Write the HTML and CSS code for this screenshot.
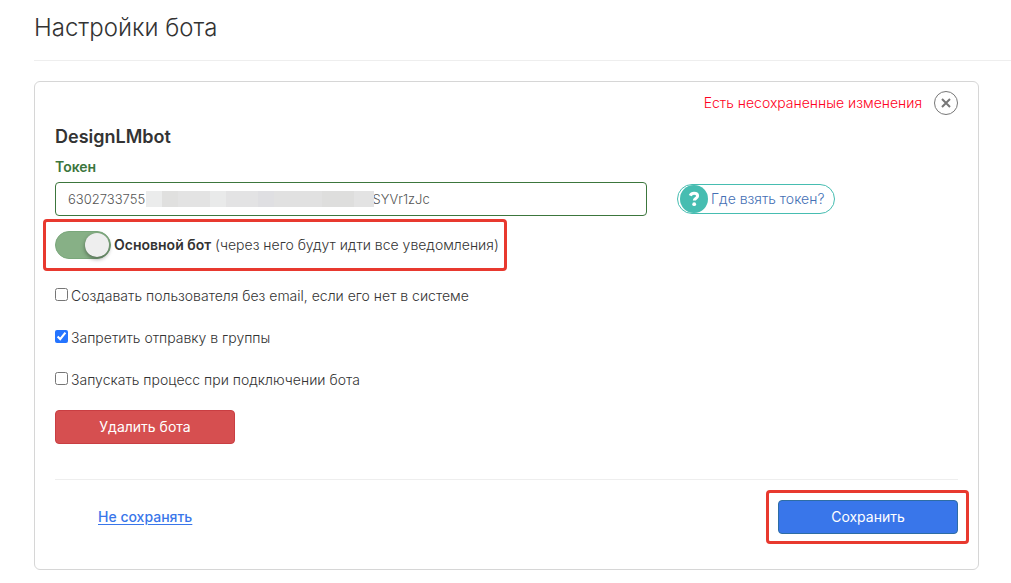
FILE: index.html
```
<!DOCTYPE html>
<html lang="ru">
<head>
    <meta charset="UTF-8">
    <meta name="viewport" content="width=device-width, initial-scale=1.0">
    <title>Настройки бота</title>
    <link rel="stylesheet" href="styles.css">
</head>
<body>
    <main class="page">
        <h1 class="page-title">Настройки бота</h1>

        <form class="card">
            <div class="card-top">
                <span class="unsaved">Есть несохраненные изменения</span>
                <button type="button" class="close" aria-label="Закрыть">
                    <svg width="10" height="10" viewBox="0 0 10 10"><path d="M1 1l8 8M9 1L1 9" stroke="#777" stroke-width="2" fill="none"/></svg>
                </button>
            </div>

            <h2 class="bot-name">DesignLMbot</h2>

            <label class="token-label" for="token">Токен</label>
            <div class="row">
                <div class="token-field">
                    <input type="text" id="token" class="token-input" value="6302733755&emsp;&emsp;&emsp;&emsp;&emsp;&emsp;&emsp;&emsp;&emsp;&emsp;&emsp;&emsp;&emsp;&emsp;&emsp;&emsp;&emsp;&ensp;SYVr1zJc">
                    <span class="mask"></span>
                </div>
                <div class="help-col">
                    <a href="#" class="help">
                        <span class="help-icon">
                            <svg width="28" height="28" viewBox="0 0 28 28"><circle cx="14" cy="14" r="14" fill="#46bdb1"/><path d="M10.2 10.6C11.1 8.8 12.4 8.2 14 8.2c2.1 0 3.6 1.1 3.6 2.7 0 2.3-3.3 2.2-3.3 4.6" fill="none" stroke="#fff" stroke-width="3"/><circle cx="14.2" cy="19.2" r="1.9" fill="#fff"/></svg>
                        </span>
                        Где взять токен?
                    </a>
                </div>
            </div>

            <label class="main-bot highlight">
                <input type="checkbox" class="switch" checked>
                <span><b>Основной бот</b> (через него будут идти все уведомления)</span>
            </label>

            <div class="options">
                <label class="option"><input type="checkbox"> Создавать пользователя без email, если его нет в системе</label>
                <label class="option"><input type="checkbox" checked> Запретить отправку в группы</label>
                <label class="option"><input type="checkbox"> Запускать процесс при подключении бота</label>
            </div>

            <button type="button" class="btn btn-danger">Удалить бота</button>

            <div class="card-footer">
                <a href="#" class="cancel">Не сохранять</a>
                <span class="save highlight"><button type="submit" class="btn btn-primary">Сохранить</button></span>
            </div>
        </form>
    </main>
</body>
</html>
```
FILE: styles.css
```
* {
    box-sizing: border-box;
}
body {
    margin: 0;
    background: #fff;
    color: #333;
    font-family: Inter, "Open Sans", sans-serif;
    font-size: 14px;
    font-weight: 300;
    line-height: 20px;
}
.page {
    padding: 12px 0 13px 34px;
}
.page-title {
    margin: 0 0 20px;
    padding-bottom: 16px;
    border-bottom: 1px solid #eee;
    font-size: 24px;
    font-weight: 300;
    line-height: 32px;
}
.card {
    margin-right: 32px;
    padding: 9px 20px 35px;
    border: 1px solid #d6d6d6;
    border-radius: 6px;
}
.card-top {
    display: flex;
    justify-content: flex-end;
    align-items: center;
    gap: 12px;
}
.unsaved {
    color: #ff0022;
}
.close {
    display: flex;
    align-items: center;
    justify-content: center;
    width: 24px;
    height: 24px;
    padding: 0;
    border: 1px solid #777;
    border-radius: 50%;
    background: #fff;
    cursor: pointer;
}
.bot-name {
    margin: 10px 0 8px;
    font-size: 18px;
    font-weight: 600;
    line-height: 24px;
}
.token-label {
    display: block;
    margin-bottom: 5px;
    color: #3c763d;
    font-weight: 600;
}
.row {
    display: grid;
    grid-template-columns: repeat(12, 1fr);
    column-gap: 30px;
    align-items: center;
}
.token-field {
    position: relative;
    grid-column: span 8;
}
.token-input {
    display: block;
    width: 100%;
    height: 34px;
    padding: 6px 12px;
    border: 1px solid #3c763d;
    border-radius: 4px;
    color: #555;
    font: inherit;
    font-size: 13px;
}
/* hides the middle of the token */
.mask {
    position: absolute;
    top: 9px;
    left: 91px;
    width: 228px;
    height: 16px;
    background: linear-gradient(90deg, #ebecec 0 16px, #e0e0df 16px 32px, #e3e3e3 32px 64px, #e9eaea 64px 80px, #e3e3e4 80px 112px, #dfdfe2 112px 128px, #e1e1e1 128px 176px, #dededd 176px 208px, #e3e3e3 208px);
}
.help-col {
    grid-column: span 4;
}
.help {
    display: inline-flex;
    align-items: center;
    gap: 3px;
    height: 30px;
    padding: 0 10px 0 2px;
    border: 1px solid #46bdb1;
    border-radius: 15px;
    color: #4470b5;
    text-decoration: none;
    vertical-align: top;
}
.help-icon {
    display: flex;
}
.highlight {
    position: relative;
}
.highlight::after {
    content: "";
    position: absolute;
    inset: -12px -8px -12px -12px;
    border: 3px solid #e8392f;
    border-radius: 4px;
    pointer-events: none;
}
.main-bot {
    display: flex;
    align-items: center;
    gap: 3px;
    width: fit-content;
    margin-top: 15px;
}
.main-bot b {
    font-weight: 600;
}
.switch {
    appearance: none;
    flex: none;
    width: 56px;
    height: 28px;
    margin: 0;
    padding: 1px;
    border: 1px solid #7aa77b;
    border-radius: 14px;
    background: #87b086;
}
.switch::before {
    content: "";
    display: block;
    width: 24px;
    height: 24px;
    border-radius: 50%;
    background: #eee;
    box-shadow: 0 2px 4px rgba(0, 0, 0, 0.4);
}
.switch:checked::before {
    margin-left: auto;
}
.options {
    display: flex;
    flex-direction: column;
    align-items: flex-start;
    gap: 22px;
    margin: 27px 0 20px;
}
.option {
    display: flex;
    gap: 3px;
}
.option input {
    width: 13px;
    height: 13px;
    margin: 2px 0 0;
    accent-color: #2474ff;
}
.btn {
    width: 180px;
    height: 34px;
    border: 1px solid;
    border-radius: 4px;
    color: #fff;
    font: inherit;
    font-weight: 400;
    cursor: pointer;
}
.btn-danger {
    border-color: #c93e42;
    background: #d64f50;
}
.btn-primary {
    display: block;
    border-color: #2e6da4;
    background: #3976ea;
}
.card-footer {
    display: flex;
    justify-content: space-between;
    align-items: center;
    margin-top: 35px;
    padding: 20px 0 0 43px;
    border-top: 1px solid #eee;
}
.cancel {
    color: #3976ea;
    font-weight: 500;
    text-underline-offset: 2px;
}
.save::after {
    inset: -10px -11px -10px -12px;
}
```
